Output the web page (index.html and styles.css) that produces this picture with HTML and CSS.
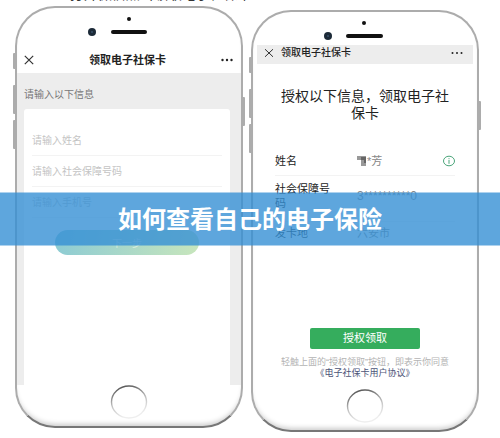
FILE: index.html
```
<!DOCTYPE html>
<html lang="zh-CN">

<head>
    <meta charset="UTF-8">
    <meta name="viewport" content="width=device-width, initial-scale=1.0">
    <title>如何查看自己的电子保险</title>
    <link rel="stylesheet" href="styles.css">
</head>

<body>

    <p class="caption">1、打开微信点击领取电子社保卡</p>

    <main class="phones">
        <!-- Step 1: personal details -->
        <section class="phone">
            <span class="side-key key-mute"></span>
            <span class="side-key key-up"></span>
            <span class="side-key key-down"></span>
            <span class="side-key key-power"></span>
            <div class="bezel-top">
                <svg viewBox="0 0 60 24" width="60" height="24" aria-hidden="true">
                    <circle cx="42" cy="4" r="2" fill="#111" />
                    <circle cx="5" cy="17" r="4" fill="#1c2a38" />
                    <circle cx="5" cy="17" r="1" fill="#38506a" />
                    <rect x="24" y="15" width="36" height="4" rx="2" fill="#111" />
                </svg>
            </div>

            <div class="screen">
                <header class="nav">
                    <button class="icon-btn" type="button" aria-label="关闭">
                        <svg viewBox="0 0 10 10" width="10" height="10">
                            <path d="M.8 .8L9.2 9.2M9.2 .8L.8 9.2" stroke="#333" stroke-width="1.2" fill="none" />
                        </svg>
                    </button>
                    <h2>领取电子社保卡</h2>
                    <button class="icon-btn" type="button" aria-label="更多">
                        <svg viewBox="0 0 12 4" width="12" height="4" fill="#222">
                            <circle cx="1.5" cy="2" r="1.2" />
                            <circle cx="6" cy="2" r="1.2" />
                            <circle cx="10.5" cy="2" r="1.2" />
                        </svg>
                    </button>
                </header>
                <form class="details">
                    <p class="hint">请输入以下信息</p>
                    <div class="card">
                        <input type="text" aria-label="姓名" placeholder="请输入姓名">
                        <input type="text" aria-label="社会保障号码" placeholder="请输入社会保障号码">
                        <input type="tel" aria-label="手机号" placeholder="请输入手机号">
                        <button class="next" type="button">下一步</button>
                    </div>
                </form>
            </div>

            <div class="bezel-bottom">
                <svg viewBox="0 0 38 38" width="38" height="38" aria-hidden="true">
                    <defs>
                        <linearGradient id="ring" x1="0" y1="0" x2=".3" y2="1">
                            <stop offset="0" stop-color="#444" />
                            <stop offset=".6" stop-color="#c4c4c4" />
                            <stop offset="1" stop-color="#eee" />
                        </linearGradient>
                    </defs>
                    <ellipse cx="19" cy="17" rx="17.5" ry="16" fill="#fff" stroke="url(#ring)" stroke-width="1.4" />
                </svg>
            </div>
        </section>

        <!-- Step 2: authorisation -->
        <section class="phone phone-auth">
            <span class="side-key key-mute"></span>
            <span class="side-key key-up"></span>
            <span class="side-key key-down"></span>
            <span class="side-key key-power"></span>
            <div class="bezel-top">
                <svg viewBox="0 0 60 24" width="60" height="24" aria-hidden="true">
                    <circle cx="41" cy="4" r="2" fill="#111" />
                    <circle cx="5" cy="17" r="4" fill="#1c2a38" />
                    <circle cx="5" cy="17" r="1" fill="#38506a" />
                    <rect x="23" y="15" width="37" height="4" rx="2" fill="#111" />
                </svg>
            </div>

            <div class="screen">
                <header class="nav">
                    <button class="icon-btn" type="button" aria-label="关闭">
                        <svg viewBox="0 0 10 10" width="10" height="10">
                            <path d="M1 1.2L9 8.8M9 1.2L1 8.8" stroke="#333" fill="none" />
                        </svg>
                    </button>
                    <h2>领取电子社保卡</h2>
                    <button class="icon-btn" type="button" aria-label="更多">
                        <svg viewBox="0 0 12 4" width="12" height="4" fill="#222">
                            <circle cx="1.5" cy="2" r="1" />
                            <circle cx="6" cy="2" r="1" />
                            <circle cx="10.5" cy="2" r="1" />
                        </svg>
                    </button>
                </header>
                <div class="auth">
                    <h3>授权以下信息，领取电子社保卡</h3>
                    <dl>
                        <div class="row">
                            <dt>姓名</dt>
                            <dd>
                                <svg viewBox="0 0 10 12" width="10" height="12" aria-hidden="true">
                                    <path d="M0 1h9v10H4V5H0z" fill="#999" />
                                    <path d="M4 2h5v6H7V5H4z" fill="#666" />
                                </svg>*芳
                            </dd>
                            <dd class="info">
                                <svg viewBox="0 0 12 12" width="12" height="12" aria-hidden="true">
                                    <ellipse cx="6" cy="6" rx="5.5" ry="4.8" fill="none" stroke="#4ba57a" />
                                    <path d="M6 3.2v1M6 5v3.8" stroke="#4ba57a" fill="none" />
                                </svg>
                            </dd>
                        </div>
                        <div class="row row-number">
                            <dt>社会保障号码</dt>
                            <dd>3**********0</dd>
                        </div>
                        <div class="row">
                            <dt>发卡地</dt>
                            <dd>六安市</dd>
                        </div>
                    </dl>
                    <button class="confirm" type="button">授权领取</button>
                    <p class="terms">轻触上面的“授权领取”按钮，即表示你同意
                        <a href="#">《电子社保卡用户协议》</a>
                    </p>
                </div>
            </div>

            <div class="bezel-bottom">
                <svg viewBox="0 0 38 38" width="38" height="38" aria-hidden="true">
                    <ellipse cx="19" cy="17" rx="17.5" ry="16" fill="#fff" stroke="url(#ring)" stroke-width="1.4" />
                </svg>
            </div>
        </section>
    </main>

    <!-- Title over the screenshots -->
    <div class="banner">
        <h1>如何查看自己的电子保险</h1>
    </div>

</body>

</html>
```
FILE: styles.css
```
* {
    margin: 0;
    padding: 0;
    box-sizing: border-box;
}

body {
    position: relative;
    font-family: "Liberation Sans", "Noto Sans CJK SC", sans-serif;
    background: #fff;
    color: #333;
}

button,
input {
    font: inherit;
    border: 0;
    background: none;
}

/* Last line of the text above the phones */
.caption {
    position: absolute;
    top: -14px;
    left: 48px;
    font-size: 14px;
    line-height: 16px;
    color: #333;
    white-space: nowrap;
}

/* Phones */
.phones {
    display: grid;
    grid-template-columns: 1fr 1fr;
    align-items: start;
    gap: 8px;
    padding: 6px 21px 5px 15px;
}

.phone {
    position: relative;
    display: flex;
    flex-direction: column;
    min-height: 422px;
    border: 2px solid #acacac;
    border-bottom-color: #777;
    border-radius: 40px;
    background: #fff;
    box-shadow: inset 0 -5px 5px -3px #ccc;
}

.phone-auth {
    margin-top: 4px;
}

.side-key {
    position: absolute;
    width: 3px;
    height: 29px;
    background: #acacac;
    border-radius: 1px;
}

.key-mute {
    left: -4px;
    top: 45px;
    height: 16px;
}

.key-up {
    left: -4px;
    top: 77px;
}

.key-down {
    left: -4px;
    top: 112px;
}

.key-power {
    right: -4px;
    top: 89px;
}

.bezel-top {
    height: 42px;
    padding: 7px 0 0 70px;
}

.phone-auth .bezel-top {
    height: 33px;
}

.bezel-top svg,
.bezel-bottom svg {
    display: block;
}

.bezel-bottom {
    height: 41px;
}

.bezel-bottom svg {
    margin: 0 auto;
}

.screen {
    flex: 1;
    display: flex;
    flex-direction: column;
}

.nav {
    display: flex;
    align-items: center;
    justify-content: space-between;
    height: 23px;
    padding: 0 8px 4px 7px;
}

.nav h2 {
    font-size: 11px;
    line-height: 16px;
    font-weight: bold;
    color: #222;
}

.icon-btn {
    display: flex;
}

/* Details form */
.details {
    flex: 1;
    display: flex;
    flex-direction: column;
    padding: 0 11px 0 7px;
    background: #ededed;
}

.hint {
    padding: 14px 0 6px;
    font-size: 10px;
    line-height: 16px;
    color: #777;
}

.card {
    flex: 1;
    padding: 16px 8px 0;
    border-radius: 3px 3px 0 0;
    background: #fff;
}

.card input {
    display: block;
    width: 100%;
    height: 31px;
    border-bottom: 1px solid #f3f3f3;
    font-size: 10px;
    color: #333;
}

.card input::placeholder {
    color: #c4c4c4;
    opacity: 1;
}

.next {
    display: block;
    width: 144px;
    height: 25px;
    margin: 12px auto 0;
    border-radius: 13px;
    background: linear-gradient(100deg, #8ccbd4, #c8e6bc);
    color: #d8eee0;
    font-size: 10px;
}

/* Authorisation page */
.phone-auth .screen {
    padding: 0 4px;
}

.phone-auth .nav {
    justify-content: flex-start;
    height: 19px;
    padding: 0 10px 4px 7px;
    background: #ededed;
}

.phone-auth .nav h2 {
    flex: 1;
    margin-left: 7px;
    font-size: 10px;
    font-weight: 500;
}

.auth {
    padding: 24px 18px 0;
}

.auth h3 {
    margin-bottom: 28px;
    font-size: 14px;
    line-height: 17px;
    font-weight: normal;
    text-align: center;
    color: #222;
}

.row {
    display: flex;
    align-items: center;
    height: 26px;
    padding-bottom: 4px;
    border-bottom: 1px solid #f3f3f3;
    font-size: 11px;
    line-height: 14px;
}

.row:last-child {
    border-bottom: 0;
}

.row dt {
    width: 56px;
    margin-right: 26px;
    color: #222;
}

.row dd {
    display: flex;
    align-items: center;
    color: #888;
}

.row .info {
    margin-left: auto;
}

.row-number {
    height: 46px;
    padding-bottom: 6px;
}

.row-number dd {
    font-size: 12px;
}

.confirm {
    display: block;
    width: 110px;
    height: 21px;
    margin: 80px auto 8px;
    border-radius: 2px;
    background: #35ad5d;
    color: #fff;
    font-size: 11px;
    line-height: 21px;
}

.terms {
    font-size: 9px;
    line-height: 11px;
    text-align: center;
    color: #b4b4b4;
}

.terms a {
    display: block;
    color: #4c5478;
    text-decoration: none;
}

/* Banner */
.banner {
    position: absolute;
    top: 50%;
    left: 0;
    right: 0;
    padding: 8px 0;
    transform: translateY(-50%);
    background: rgba(54, 144, 213, .8);
    text-align: center;
}

.banner h1 {
    font-size: 24px;
    line-height: 37px;
    font-weight: bold;
    color: #fff;
}
```
